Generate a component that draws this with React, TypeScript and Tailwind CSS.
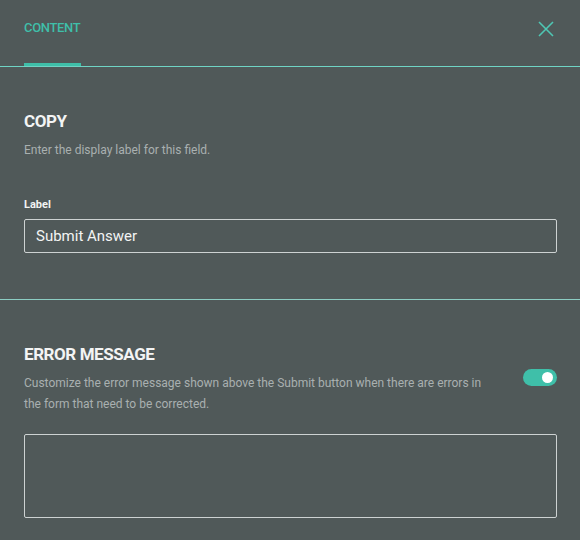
export default function App() {
  return (
    <div
      className="w-[580px] h-[540px] overflow-hidden bg-[#505959] text-white"
      style={{ fontFamily: 'Roboto, "Liberation Sans", sans-serif' }}
    >
      {/* tabs */}
      <div className="h-[67px] border-b border-[#6fd4c5] flex items-stretch justify-between pl-6 pr-[26px]">
        <div className="flex flex-col justify-between">
          <div className="pt-[20px] text-[13px] font-medium text-[#3fbfa9] tracking-tight leading-4">CONTENT</div>
          <div className="h-[3px] w-[57px] bg-[#3fbfa9]" />
        </div>
        <button className="pt-[21px] self-start">
          <svg width="16" height="16" viewBox="0 0 16 16" fill="none" stroke="#4fc6b3" strokeWidth="1.6">
            <path d="M1 1 L15 15 M15 1 L1 15" />
          </svg>
        </button>
      </div>

      {/* copy */}
      <div className="pl-6 pr-[23px] pt-[44px] pb-[46px] border-b border-[#8ccdc3]">
        <h2 className="text-[17px] font-bold leading-5 tracking-tight text-[#f3f4f4]">COPY</h2>
        <p className="mt-[11px] text-[12px] leading-4 text-[#a9b0b0]">Enter the display label for this field.</p>
        <label className="block mt-[39px] text-[11px] font-bold leading-4 text-[#f3f4f4]">Label</label>
        <div className="mt-[6px] h-[34px] border border-[#cdd2d2] rounded-[2px] flex items-center px-[11px] text-[15px] text-[#f3f4f4]">
          Submit Answer
        </div>
      </div>

      {/* error message */}
      <div className="pl-6 pr-[23px] pt-[44px]">
        <h2 className="text-[17px] font-bold leading-5 tracking-tight text-[#f3f4f4]">ERROR MESSAGE</h2>
        <div className="mt-[9px] flex items-start justify-between">
          <p className="w-[470px] text-[12px] leading-[21px] text-[#a9b0b0]">
            Customize the error message shown above the Submit button when there are errors in the form that need to be corrected.
          </p>
          <div className="mt-[-4px] w-[34px] h-[17px] rounded-full bg-[#3fbfa9] flex items-center justify-end pr-[4px]">
            <div className="w-[11px] h-[11px] rounded-full bg-white" />
          </div>
        </div>
        <div className="mt-[19px] h-[84px] border border-[#cdd2d2] rounded-[2px]" />
      </div>
    </div>
  );
}
